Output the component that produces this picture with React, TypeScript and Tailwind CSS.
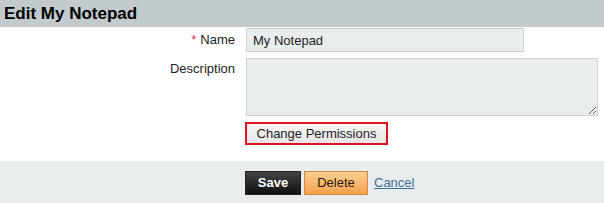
import { useState } from "react";

export default function App() {
  const [name, setName] = useState("My Notepad");
  const [desc, setDesc] = useState("");

  return (
    <div className="w-[604px] h-[203px] bg-white flex flex-col" style={{ fontFamily: "'Liberation Sans', Arial, sans-serif" }}>
      {/* Header */}
      <div className="h-[27px] bg-[#c2cacd] flex items-center px-[4px]">
        <h1 className="text-[17px] font-bold text-black leading-none">Edit My Notepad</h1>
      </div>

      {/* Form */}
      <div className="flex-1 pt-[1px]">
        <div className="grid grid-cols-[235px_1fr] gap-x-[11px] gap-y-[6px] text-[13px] text-[#222]">
          <label className="h-[24px] flex items-center justify-end">
            <span className="text-[#e23a5c] mr-[4px]">*</span>Name
          </label>
          <input
            value={name}
            onChange={(e) => setName(e.target.value)}
            className="w-[278px] h-[24px] px-[6px] bg-[#e9edee] border border-[#cdd1d2] text-[13px] text-[#222] outline-none"
          />

          <label className="pt-[1px] text-right">Description</label>
          <textarea
            value={desc}
            onChange={(e) => setDesc(e.target.value)}
            className="w-[352px] h-[58px] px-[6px] py-[3px] bg-[#e9edee] border border-[#cdd1d2] text-[13px] outline-none resize-y block"
          />

          <div />
          <div className="-ml-[1px]">
            <button className="h-[23px] w-[143px] border-2 border-[#e3101e] bg-gradient-to-b from-[#f7f7f7] to-[#e6e6e6] text-[13px] text-[#222] flex items-center justify-center">
              Change Permissions
            </button>
          </div>
        </div>
      </div>

      {/* Footer */}
      <div className="h-[42px] bg-[#e8ecec] pt-[10px] pl-[245px] flex items-start gap-[3px]">
        <button className="h-[24px] w-[56px] bg-gradient-to-b from-[#444] to-[#111] border border-[#222] text-white font-bold text-[13px]">
          Save
        </button>
        <button className="h-[24px] w-[64px] bg-gradient-to-b from-[#fdd08f] to-[#f3a04c] border border-[#d9893e] text-[#2a1a0a] text-[13px]">
          Delete
        </button>
        <a href="#" className="ml-[3px] h-[24px] flex items-center text-[13px] text-[#3f6f9a] underline">
          Cancel
        </a>
      </div>
    </div>
  );
}
